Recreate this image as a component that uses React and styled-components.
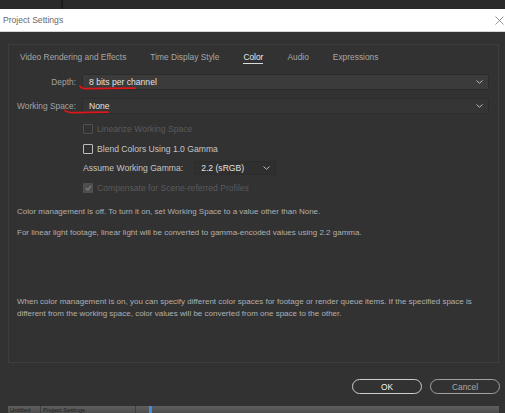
import React from 'react';
import styled, { createGlobalStyle } from 'styled-components';

const GlobalStyle = createGlobalStyle`
  html, body {
    margin: 0;
    padding: 0;
    background: #2b2b2b;
  }
  body {
    font-family: "Liberation Sans", Arial, sans-serif;
  }
`;

const Screen = styled.div`
  position: relative;
  width: 505px;
  height: 413px;
  overflow: hidden;
  display: flex;
  flex-direction: column;
  background: #323232;
`;

const BackStrip = styled.div`
  height: 9px;
  flex: none;
  display: flex;
  background: #2a2a2a;
`;

const BackPane = styled.div`
  width: 61px;
  border-right: 2px solid #1c1c1c;
`;

const TitleBar = styled.div`
  height: 22px;
  flex: none;
  display: flex;
  align-items: center;
  justify-content: space-between;
  background: #ffffff;
  border-bottom: 1px solid #d6d6d6;
  padding: 0 1px 0 3px;
  color: #6a6a6a;
  font-size: 8.6px;
`;

const Body = styled.div`
  flex: 1;
  display: flex;
  flex-direction: column;
  padding: 12px 6px 0 8px;
  background: #323232;
`;

const Panel = styled.div`
  height: 317px;
  border: 1px solid #3e3e3e;
  display: flex;
  flex-direction: column;
`;

const Tabs = styled.div`
  display: flex;
  gap: 24px;
  padding: 7px 0 0 11px;
`;

const Tab = styled.div`
  font-size: 8.4px;
  line-height: 10px;
  color: ${p => (p.active ? '#e6e6e6' : '#a6a6a6')};
  border-bottom: 1.5px solid ${p => (p.active ? '#dcdcdc' : 'transparent')};
  padding-bottom: 0.5px;
`;

const FieldRow = styled.div`
  display: grid;
  grid-template-columns: 67px 1fr;
  column-gap: 6px;
  align-items: center;
  padding-right: 9px;
  margin-top: ${p => p.gap}px;
`;

const Label = styled.div`
  text-align: right;
  font-size: 8.4px;
  color: #a3a3a3;
`;

const Dropdown = styled.div`
  height: ${p => p.h}px;
  display: flex;
  align-items: center;
  justify-content: space-between;
  padding: 0 5px 0 6px;
  background: ${p => (p.light ? '#3b3b3b' : '#353535')};
  border: 1px solid #2c2c2c;
  border-radius: 1px;
  color: #e2e2e2;
  font-size: 8.6px;
  box-sizing: border-box;
`;

const Options = styled.div`
  display: flex;
  flex-direction: column;
  margin-top: 6px;
  padding-left: 74px;
`;

const OptionRow = styled.div`
  height: 19.5px;
  display: flex;
  align-items: center;
  gap: 4px;
  font-size: 8.6px;
  color: ${p => (p.disabled ? '#5a5a5a' : '#c4c4c4')};
`;

const Box = styled.div`
  width: 8px;
  height: 8px;
  border: 1px solid ${p => (p.disabled ? '#505050' : '#bdbdbd')};
  border-radius: 1px;
  display: flex;
  align-items: center;
  justify-content: center;
  background: ${p => (p.checked ? '#4e4e4e' : 'transparent')};
`;

const GammaSelect = styled(Dropdown)`
  margin-left: 7px;
  height: 14px;
  width: 82px;
  background: #2f2f2f;
`;

const Note = styled.p`
  margin: ${p => p.top}px 0 0;
  padding-left: 8px;
  font-size: 8px;
  line-height: 12px;
  color: #b0b0b0;
`;

const Footer = styled.div`
  display: flex;
  justify-content: flex-end;
  gap: 8px;
  padding-top: 16px;
  margin-right: -1px;
`;

const Button = styled.div`
  width: 70px;
  height: 15px;
  box-sizing: border-box;
  border: 1.5px solid ${p => (p.primary ? '#cfcfcf' : '#a0a0a0')};
  border-radius: 8px;
  display: flex;
  align-items: center;
  justify-content: center;
  font-size: 8.4px;
  color: ${p => (p.primary ? '#f0f0f0' : '#a8a8a8')};
`;

const TaskStrip = styled.div`
  margin-top: auto;
  height: 7px;
  flex: none;
  display: flex;
  background: linear-gradient(#5e5e5e, #4e4e4e);
  font-size: 6px;
  color: #1e1e1e;
  overflow: hidden;
`;

const TaskCell = styled.div`
  width: ${p => p.w}px;
  flex: none;
  padding-left: 2px;
  border-right: 1px solid #3e3e3e;
  line-height: 9px;
  white-space: nowrap;
  overflow: hidden;
`;

const TaskMarker = styled.div`
  width: 3px;
  flex: none;
  margin-left: 13px;
  background: #3d8fe6;
`;

const Marks = styled.svg`
  position: absolute;
  left: 0;
  top: 0;
  pointer-events: none;
`;

const Chevron = ({ color = '#bdbdbd' }) => (
  <svg width="7" height="4" viewBox="0 0 7 4">
    <path d="M0.5 0.5 L3.5 3.2 L6.5 0.5" fill="none" stroke={color} strokeWidth="1" />
  </svg>
);

const Tick = () => (
  <svg width="7" height="6" viewBox="0 0 7 6">
    <path d="M0.8 3 L2.8 5 L6.2 0.8" fill="none" stroke="#7a7a7a" strokeWidth="1.3" />
  </svg>
);

const CloseIcon = () => (
  <svg width="9" height="9" viewBox="0 0 9 9">
    <path d="M0.5 0.5 L8.5 8.5 M8.5 0.5 L0.5 8.5" stroke="#8a8a8a" strokeWidth="0.9" />
  </svg>
);

const tabs = ['Video Rendering and Effects', 'Time Display Style', 'Color', 'Audio', 'Expressions'];

export default function App() {
  return (
    <Screen>
      <GlobalStyle />
      <BackStrip>
        <BackPane />
      </BackStrip>
      <TitleBar>
        <span>Project Settings</span>
        <CloseIcon />
      </TitleBar>
      <Body>
        <Panel>
          <Tabs>
            {tabs.map(t => (
              <Tab key={t} active={t === 'Color'}>{t}</Tab>
            ))}
          </Tabs>

          <FieldRow gap={10}>
            <Label>Depth:</Label>
            <Dropdown h={16} light>
              <span>8 bits per channel</span>
              <Chevron />
            </Dropdown>
          </FieldRow>
          <FieldRow gap={8}>
            <Label>Working Space:</Label>
            <Dropdown h={16}>
              <span>None</span>
              <Chevron />
            </Dropdown>
          </FieldRow>

          <Options>
            <OptionRow disabled>
              <Box disabled />
              <span>Linearize Working Space</span>
            </OptionRow>
            <OptionRow>
              <Box />
              <span>Blend Colors Using 1.0 Gamma</span>
            </OptionRow>
            <OptionRow>
              <span>Assume Working Gamma:</span>
              <GammaSelect>
                <span>2.2 (sRGB)</span>
                <Chevron />
              </GammaSelect>
            </OptionRow>
            <OptionRow disabled>
              <Box disabled checked>
                <Tick />
              </Box>
              <span>Compensate for Scene-referred Profiles</span>
            </OptionRow>
          </Options>

          <Note top={8}>
            Color management is off. To turn it on, set Working Space to a value other than None.
          </Note>
          <Note top={9}>
            For linear light footage, linear light will be converted to gamma-encoded values using 2.2 gamma.
          </Note>
          <Note top={57}>
            When color management is on, you can specify different color spaces for footage or render queue items. If the specified space is
            <br />
            different from the working space, color values will be converted from one space to the other.
          </Note>
        </Panel>

        <Footer>
          <Button primary>OK</Button>
          <Button>Cancel</Button>
        </Footer>

        <TaskStrip>
          <TaskCell w={30}>Untitled</TaskCell>
          <TaskCell w={92}>Project Settings</TaskCell>
          <TaskMarker />
        </TaskStrip>
      </Body>

      <Marks width="505" height="413" viewBox="0 0 505 413">
        <path d="M80 86 Q81 88.6 86 88.6 L135 88.2" fill="none" stroke="#e0161b" strokeWidth="1.8" strokeLinecap="round" />
        <path d="M65 110.5 Q67 112.6 74 112.6 L108 112.2" fill="none" stroke="#e0161b" strokeWidth="1.8" strokeLinecap="round" />
      </Marks>
    </Screen>
  );
}
